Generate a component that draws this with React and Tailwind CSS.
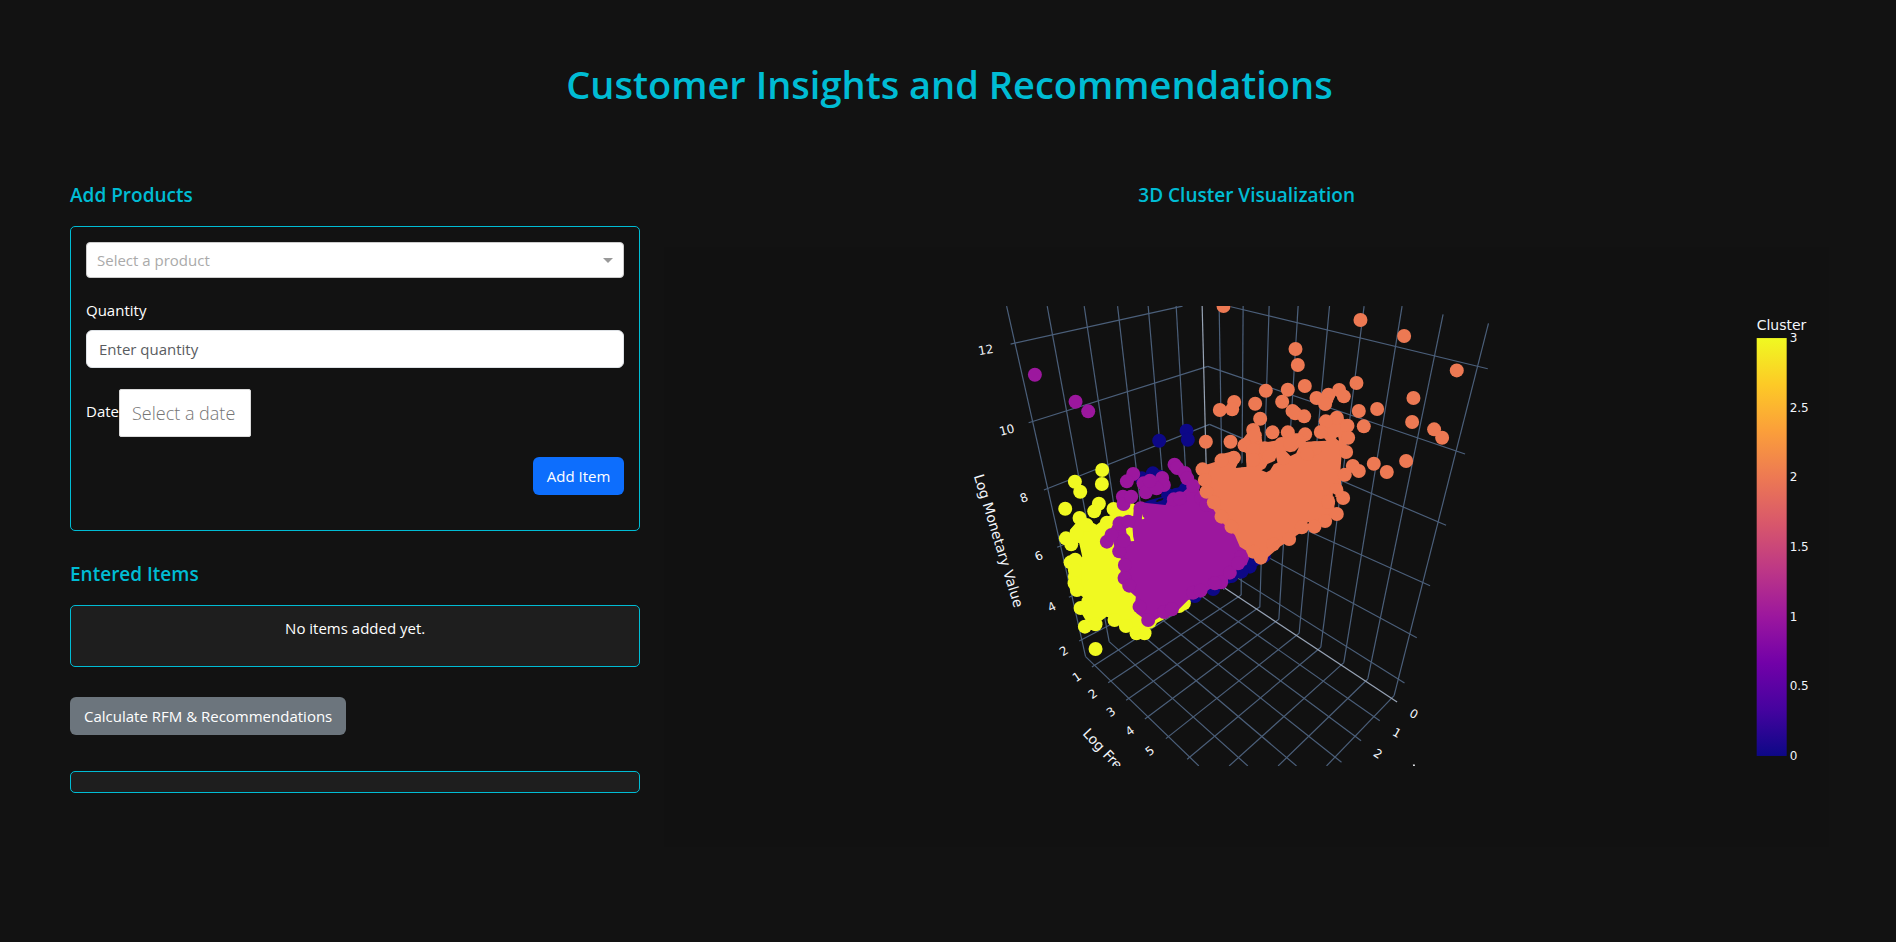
import React from "react";

const COLORS = { 0: "#0d0887", 1: "#9c179e", 2: "#ed7953", 3: "#f0f921" };

// Grid segments of the three scene planes: [x1, y1, x2, y2]
const LEFT_WALL = [
  [1006.7, 306, 1085.7, 656.7],
  [1047.3, 306, 1109.3, 641.7],
  [1084.3, 306, 1130, 612],
  [1117.7, 306, 1148, 570],
  [1148.3, 306, 1168, 540],
  [1176.3, 306, 1188, 510],
  [1010.7, 344, 1182.7, 306],
  [1028.7, 422.7, 1208, 366.3],
  [1044, 490, 1209.7, 424.3],
  [1057.3, 547.3, 1110, 526],
  [1069, 597.3, 1110, 580],
  [1079.3, 641, 1150, 604],
];

const RIGHT_WALL = [
  [1219.3, 306, 1224, 590],
  [1243.3, 306, 1241.3, 595],
  [1269.3, 306, 1260, 607.3],
  [1298.3, 306, 1279, 619.3],
  [1329.7, 306, 1299.3, 633.3],
  [1364.3, 306, 1321, 647.3],
  [1402.3, 306, 1344, 662.7],
  [1443.3, 314.3, 1368, 679],
  [1488.7, 323.3, 1394.3, 695.7],
  [1231, 306.7, 1488, 368.7],
  [1208, 366.3, 1465.3, 454],
  [1209.7, 424.3, 1446.3, 525.3],
  [1215, 489, 1430.3, 585.7],
  [1240, 542, 1417, 637.7],
  [1225, 570, 1404.7, 683],
];

const FLOOR = [
  [1092, 667, 1190, 604],
  [1108.3, 682.7, 1241.3, 595],
  [1126.3, 700.3, 1260, 606.7],
  [1145, 719, 1279, 619.3],
  [1166, 738.7, 1299.3, 633.3],
  [1187.3, 759.3, 1321, 647.3],
  [1229.3, 766, 1344, 662.7],
  [1278.3, 766, 1368, 679],
  [1326.7, 766, 1394.3, 695.7],
  [1085.7, 656.7, 1199, 766],
  [1109.3, 641.7, 1248, 766],
  [1140, 633, 1296.7, 766],
  [1162.7, 620, 1341.7, 762.3],
  [1184, 609, 1361.3, 740.7],
  [1202.7, 596.7, 1380, 720.7],
];

const ZERO_LINES = [
  [1202.3, 306, 1206.7, 480],
  [1225.3, 588.3, 1397.3, 702],
];

// Markers are stored at three times scene scale, relative to each group's origin.
const NAVY = [
  [328, 2], [410, -28], [414, -1], [309, 100], [276, 115], [355, 166], [380, 164], [408, 146], [330, 110],
  [435, 468], [425, 466], [490, 447], [545, 408], [535, 410], [600, 380], [615, 358], [642, 348], [575, 395],
];

const YELLOW = [
  [157, 90], [75, 125], [91, 155], [156, 132], [46, 206], [147, 191], [133, 214], [191, 207], [89, 234],
  [48, 295], [64, 313], [80, 280], [171, 248], [62, 367], [76, 359], [75, 410], [74, 430], [81, 450],
  [92, 504], [105, 560], [137, 553], [194, 540], [228, 558], [260, 580], [284, 580], [115, 485], [300, 545],
  [340, 515], [402, 490], [388, 498], [240, 210], [110, 255], [215, 212], [75, 390], [137, 627],
];

const PURPLE = [
  [250, 102], [231, 124], [219, 170], [221, 192], [244, 170], [374, 74], [382, 84], [405, 99], [412, 115],
  [430, 138], [281, 130], [288, 157], [310, 130], [337, 114], [342, 135], [320, 145], [300, 122], [171, 305],
  [185, 285], [209, 250], [208, 334], [222, 303], [225, 375], [224, 414], [238, 437], [269, 500], [295, 540],
  [343, 516], [366, 508], [235, 245], [372, 178], [272, 205], [455, 175], [430, 458], [452, 452], [514, 427],
  [495, 430], [540, 398], [390, 175], [470, 195], [-45, -196], [77, -115], [115, -86],
];

const ORANGE = [
  [482, 90], [613, 138], [287, 177], [294, 225], [315, 288], [264, 299], [198, 302], [247, 335], [278, 363],
  [286, 370], [313, 379], [166, 341], [103, 336], [97, 358], [60, 360], [181, 386], [18, 455], [92, 455],
  [470, 279], [350, 324], [386, 314], [380, 328], [376, 342], [418, 300], [432, 319], [477, 363], [532, 357],
  [492, 409], [641, 324], [637, 396], [771, 241], [703, 418], [727, 443], [619, 513], [522, 521], [561, 546],
  [218, 427], [160, 420], [165, 436], [264, 427], [316, 433], [411, 383], [378, 394], [443, 407], [363, 426],
  [445, 443], [439, 486], [459, 528], [477, 543], [430, 624], [411, 672], [435, 554], [376, 693], [344, 710],
  [306, 712], [268, 747], [220, 763], [183, 803], [160, 785], [8, 538], [15, 570], [20, 605], [42, 637],
  [65, 680], [95, 710], [102, 503], [65, 511], [134, 466], [195, 475], [207, 500], [71, 48], [410, 600],
  [385, 635], [245, 462], [272, 462], [160, 480], [160, 510], [296, 452], [345, 475], [322, 492], [250, 505],
];

const LABELS = [
  [986, 350, -10, "12"], [1007, 430, -14, "10"], [1024, 498, -20, "8"], [1039, 556, -24, "6"],
  [1052, 607, -27, "4"], [1064, 651, -32, "2"], [1077, 677, -34, "1"], [1093, 694, -35, "2"],
  [1111, 712, -36, "3"], [1130, 731, -36, "4"], [1150, 751, -37, "5"], [1414, 714, 28, "0"],
  [1397, 733, 30, "1"], [1378, 754, 32, "2"],
];

const SCALE = [
  ["0%", "#f0f921"], ["11.1%", "#fdca26"], ["22.2%", "#fb9f3a"], ["33.3%", "#ed7953"], ["44.4%", "#d8576b"],
  ["55.5%", "#bd3786"], ["66.6%", "#9c179e"], ["77.7%", "#7201a8"], ["88.8%", "#46039f"], ["100%", "#0d0887"],
];

function Lines({ items, stroke }) {
  return (
    <g stroke={stroke} strokeWidth="1.2">
      {items.map(([x1, y1, x2, y2], i) => (
        <line key={i} x1={x1} y1={y1} x2={x2} y2={y2} />
      ))}
    </g>
  );
}

function Dots({ items, fill }) {
  return items.map(([x, y], i) => <circle key={i} cx={x} cy={y} r="21" fill={fill} />);
}

function ClusterPlot() {
  return (
    <svg
      className="block h-[600px] w-full bg-[#111111] font-['DejaVu_Sans',sans-serif]"
      viewBox="664 247 1165 600"
      role="img"
      aria-label="3D cluster scatter plot"
    >
      <defs>
        <clipPath id="scene">
          <rect x="744" y="306" width="970" height="460" />
        </clipPath>
        <linearGradient id="scale" x1="0" y1="0" x2="0" y2="1">
          {SCALE.map(([offset, color]) => (
            <stop key={offset} offset={offset} stopColor={color} />
          ))}
        </linearGradient>
      </defs>

      <g clipPath="url(#scene)">
        <Lines items={LEFT_WALL} stroke="#4b5f7a" />
        <Lines items={RIGHT_WALL} stroke="#4b5f7a" />
        <Lines items={FLOOR} stroke="#4b5f7a" />
        <Lines items={ZERO_LINES} stroke="#97a3b5" />

        <g transform="translate(1050 440) scale(0.33333)">
          <polygon
            fill={COLORS[0]}
            points="262,196 300,180 345,168 375,146 400,136 430,150 440,210 270,222"
          />
          <Dots items={NAVY} fill={COLORS[0]} />
          <polygon fill="#111111" points="317,184 326,178 341,174 338,180 322,186" />
          <polygon
            fill={COLORS[3]}
            points="60,270 90,235 110,238 140,254 170,232 200,215 250,190 290,220 300,400 400,480 420,495 385,515 300,560 270,585 240,565 200,540 170,530 150,545 110,545 95,520 100,485 103,475 80,455 58,425 60,380 97,350 88,310 60,300"
          />
          <Dots items={YELLOW} fill={COLORS[3]} />
          <polygon
            fill={COLORS[1]}
            points="180,272 200,232 250,228 252,205 272,186 290,189 347,195 360,170 400,156 430,130 455,160 490,190 620,260 620,330 600,350 590,375 560,385 540,410 520,440 490,440 440,475 415,480 385,510 340,525 300,550 260,520 255,495 258,470 235,450 212,400 215,360 195,330 190,300"
          />
          <Dots items={PURPLE} fill={COLORS[1]} />
          <polygon fill={COLORS[3]} points="228,266 238,262 248,264 250,290 253,303 243,304 240,290 230,280" />
          <polygon fill={COLORS[3]} points="277,222 279,230 284,234 282,237 276,238" />
        </g>

        <g transform="translate(1200 290) scale(0.33333)">
          <polygon
            fill={COLORS[2]}
            points="0,530 45,516 65,492 100,484 122,500 108,534 140,530 138,490 115,465 150,420 185,440 188,458 240,450 262,430 310,430 318,455 380,452 355,425 378,380 411,370 450,400 445,450 425,500 422,540 424,585 430,600 400,625 405,640 400,680 345,712 300,730 240,770 185,818 160,795 120,770 105,735 60,690 30,640 20,600"
          />
          <Dots items={ORANGE} fill={COLORS[2]} />
          <g fill="#111111">
            <polygon points="185,541 196,535 203,522 225,512 229,502 233,518 222,523 211,541 200,547" />
            <polygon points="257,482 270,487 285,484 297,472 289,490 272,498" />
            <polygon points="109,531 137,513 139,530 120,531" />
            <polygon points="408,444 415,440 418,452 412,449" />
            <polygon points="399,610 407,614 406,622 399,619" />
            <polygon points="323,697 327,696 327,700 323,701" />
          </g>
          <Dots items={[[124, 801], [115, 820]]} fill={COLORS[1]} />
        </g>

        <g fill="#f2f5fa" fontSize="12" textAnchor="middle">
          {LABELS.map(([x, y, angle, label]) => (
            <text key={`${x}-${y}`} transform={`translate(${x} ${y}) rotate(${angle})`} dy="4">
              {label}
            </text>
          ))}
        </g>
        <g fill="#f2f5fa" fontSize="14">
          <text transform="translate(998 541) rotate(73)" textAnchor="middle" dy="4">
            Log Monetary Value
          </text>
          <text transform="translate(1082 734) rotate(47)">Log Frequency</text>
        </g>
        <path d="M1413 764.500h2v1.500h-1.500z" fill="#f2f5fa" />
      </g>

      <rect x="1757" y="338" width="30" height="418" fill="url(#scale)" />
      <g fill="#f2f5fa" fontSize="12">
        <text x="1757" y="330" fontSize="14">
          Cluster
        </text>
        {["3", "2.5", "2", "1.5", "1", "0.5", "0"].map((tick, i) => (
          <text key={tick} x="1790" y={342 + Math.round(i * 69.67)}>
            {tick}
          </text>
        ))}
      </g>
    </svg>
  );
}

function SectionTitle({ children, className = "" }) {
  return <h2 className={`text-[19px] leading-6 font-semibold text-[#00bcd4] ${className}`}>{children}</h2>;
}

export default function App() {
  return (
    <div className="min-h-screen bg-[#121212] pt-[60px] pr-[67px] pb-16 pl-[70px] font-['Open_Sans','Noto_Sans',sans-serif] text-[15px] leading-6 text-white">
      <h1 className="text-center text-[38px] leading-[48px] font-semibold text-[#00bcd4]">
        Customer Insights and Recommendations
      </h1>

      <main className="mt-[75px] grid grid-cols-3 gap-6">
        <section>
          <SectionTitle>Add Products</SectionTitle>
          <form className="mt-[19px] rounded-[5px] border border-[#00bcd4] px-[15px] pt-[15px] pb-[35px]">
            <div className="relative">
              <select
                aria-label="Product"
                defaultValue=""
                className="block h-9 w-full appearance-none rounded border border-[#cccccc] bg-white px-[10px] text-[#aaaaaa]"
              >
                <option value="">Select a product</option>
              </select>
              <span className="pointer-events-none absolute top-4 right-[11px] border-x-5 border-t-5 border-x-transparent border-t-[#999999]" />
            </div>

            <label htmlFor="quantity" className="mt-5 block">
              Quantity
            </label>
            <input
              id="quantity"
              type="text"
              placeholder="Enter quantity"
              className="mt-2 block h-[38px] w-full rounded-md border border-[#dee2e6] bg-white px-3 text-[#212529] placeholder:text-[#595c5f]"
            />

            <div className="mt-[21px] flex items-center">
              <label htmlFor="date" className="pb-1">
                Date
              </label>
              <input
                id="date"
                type="text"
                placeholder="Select a date"
                className="h-12 w-[132px] rounded-xs border border-[#dbdbdb] bg-white px-3 text-lg font-light text-[#484848] placeholder:text-[#757575]"
              />
            </div>

            <div className="mt-5 flex justify-end">
              <button type="button" className="h-[38px] rounded-md bg-[#0d6efd] px-[14px]">
                Add Item
              </button>
            </div>
          </form>

          <SectionTitle className="mt-[31px]">Entered Items</SectionTitle>
          <div className="mt-[19px] rounded-[5px] border border-[#00bcd4] bg-[#1e1e1e] px-[10px] pt-[10px] pb-[26px] text-center">
            <p>No items added yet.</p>
          </div>

          <button type="button" className="mt-[30px] block h-[38px] rounded-md bg-[#6c757d] px-[14px]">
            Calculate RFM &amp; Recommendations
          </button>

          <div className="mt-9 rounded-[5px] border border-[#00bcd4] bg-[#1e1e1e] p-[10px]" />
        </section>

        <section className="col-span-2">
          <SectionTitle className="text-center">3D Cluster Visualization</SectionTitle>
          <div className="mt-10">
            <ClusterPlot />
          </div>
        </section>
      </main>
    </div>
  );
}
